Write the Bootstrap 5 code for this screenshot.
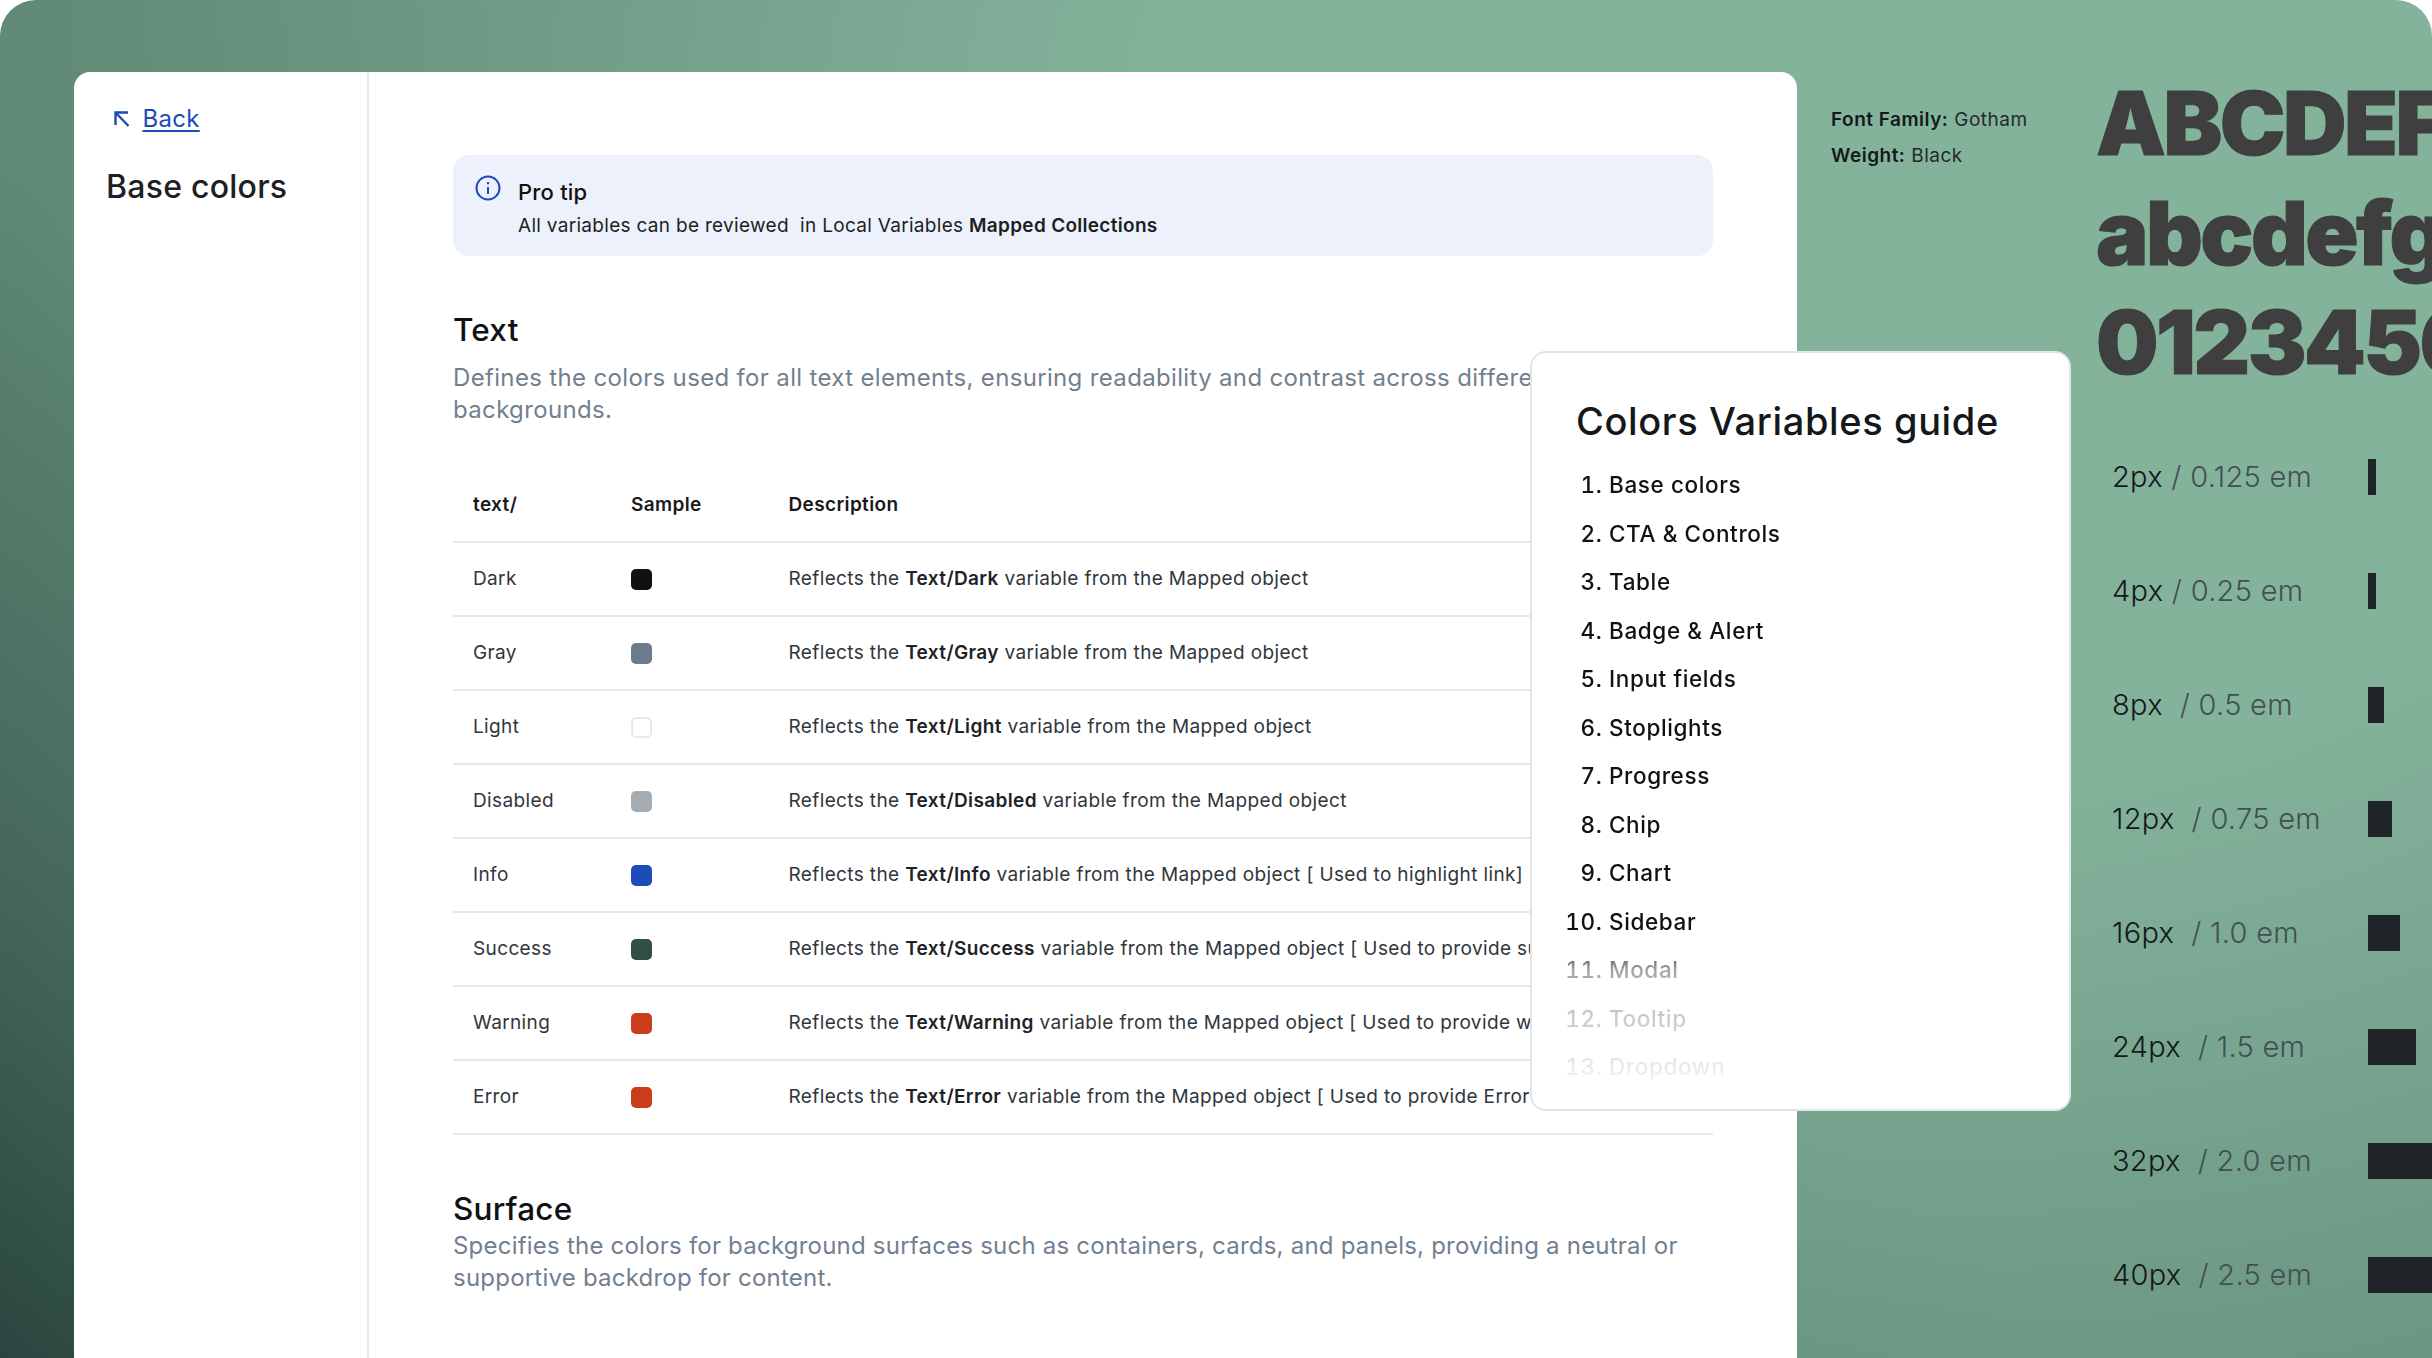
<!DOCTYPE html>
<html lang="en"><head><meta charset="utf-8"><title>Colors Variables guide</title>
<link href="https://cdn.jsdelivr.net/npm/bootstrap@5.3.0/dist/css/bootstrap.min.css" rel="stylesheet">
<style>
html,body{height:100%;margin:0;background:#fff;overflow:hidden}
body{font-family:Inter,"Liberation Sans",sans-serif;color:#111}
.stage{position:relative;height:1358px;width:2432px;overflow:hidden;border-radius:36px 36px 0 0;padding:72px 0 0 74px;
 background:linear-gradient(40deg,#2a453f 0,rgba(58,90,80,.75) 14%,rgba(90,130,112,.2) 36%,rgba(120,165,145,0) 52%),
 radial-gradient(ellipse 1900px 1500px at 80% 12%,#84b39c 0,#84b39c 40%,#628c78 100%)}
.doc{width:1723px;height:1400px;background:#fff;border-radius:16px 16px 0 0;flex:none}
.doc-side{width:295px;flex:none;border-right:2px solid #e6e8eb;padding:31px 0 0 32px}
.back-link{color:#1d4bb8;font-size:24px;line-height:32px;letter-spacing:.3px;text-decoration:underline;text-underline-offset:3px;margin-left:6px;gap:10.5px}
.side-title{font-size:32px;font-weight:500;line-height:40px;margin:32px 0 0;letter-spacing:.25px;color:#1d2125}
.doc-main{padding:83px 84px 0 84px;width:1428px}
.tip{background:#edf1fb;border-radius:16px;height:101px;padding:20px 22px;gap:17px}
.tip-title{font-size:22px;font-weight:500;line-height:30px;margin-top:2px;letter-spacing:.2px}
.tip-body{font-size:19px;line-height:28px;margin-top:5px;letter-spacing:.3px;color:#1c1f22}
.tip-body b,.cell-desc b{font-weight:600}
.sect-h{font-size:31.5px;font-weight:500;line-height:40px;margin:0;letter-spacing:.2px}
.sect-p{font-size:24px;line-height:32px;color:#71808f;margin:0;white-space:nowrap;letter-spacing:.22px}
.sect-text{margin-top:54px}
.sect-text .sect-p{margin-top:12px;letter-spacing:.34px}
.spec-table{table-layout:fixed;width:1260px;margin:42px 0 0;white-space:nowrap;font-size:19px;color:#30363b}
.spec-table th,.spec-table td{height:74px;padding:1px 0 0 20px;vertical-align:middle;border-bottom:2px solid #e5e7ea;background:transparent;letter-spacing:.37px}
.spec-table th{font-weight:600;color:#17191c}
.col-a{width:158px}
.col-b{width:157.5px}
.swatch{display:block;width:21px;height:21px;border-radius:5px}
.swatch-light{background:#fff;border:2px solid #e6e8eb}
.cell-desc b{color:#1e2226}
.sect-surface{margin-top:54px}
.sect-surface .sect-p{margin-top:1px}
.guide{position:absolute;left:1530px;top:351px;width:541px;height:760px;background:#fff;border:2px solid #e2e5e8;border-radius:16px;padding:45px 0 0 44px}
.guide-title{font-size:38px;font-weight:500;line-height:46px;margin:0;letter-spacing:.62px;color:#15181b}
.guide-list{margin:17px 0 0 -30px;padding:0 0 0 63px;font-size:22.5px;font-weight:500;letter-spacing:.62px;height:650px;
 -webkit-mask-image:linear-gradient(#000 0,#000 480px,rgba(0,0,0,.38) 509px,rgba(0,0,0,.22) 557px,rgba(0,0,0,.09) 606px,rgba(0,0,0,0) 640px);
 mask-image:linear-gradient(#000 0,#000 480px,rgba(0,0,0,.38) 509px,rgba(0,0,0,.22) 557px,rgba(0,0,0,.09) 606px,rgba(0,0,0,0) 640px)}
.guide-list li{height:48.5px;line-height:48.5px}
.fonts{padding:30px 0 0 34px;flex:1 1 auto;min-width:0}
.meta{width:265px;flex:none;font-size:19px;line-height:36px;letter-spacing:.5px;color:#25292c}
.meta b{font-weight:600;color:#14181a}
.specimen{flex:none}
.glyphs{font-size:88px;font-weight:900;line-height:109.5px;color:#3f3f3f;white-space:nowrap;letter-spacing:-2.5px;height:330px;margin-top:-33px;-webkit-text-stroke:1px #3f3f3f}
.scale-rows{padding:60px 0 0 16px;gap:78px}
.scale-label{width:256px;flex:none;font-size:29px;line-height:36px;color:#434f52;white-space:nowrap;letter-spacing:.3px;font-weight:300}
.scale-label span{color:#14181a}
.scale-bar{height:36px;background:#1f2428;display:block;flex:none}
</style></head>
<body>
<div class="stage d-flex">
 <div class="doc d-flex">
  <aside class="doc-side">
   <a class="back-link d-inline-flex align-items-center" href="#"><svg width="20" height="20" viewBox="0 0 20 20" fill="none" stroke="#1d4bb8" stroke-width="2.4"><path d="M3.5 16V3.5H16M3.5 3.5 16.5 17"/></svg><span>Back</span></a>
   <h1 class="side-title">Base colors</h1>
  </aside>
  <main class="doc-main">
   <div class="tip d-flex">
    <svg class="flex-shrink-0" width="26" height="26" viewBox="0 0 26 26" fill="none" stroke="#1d4bb8" stroke-width="2"><circle cx="13" cy="13" r="11.5"/><path d="M13 12v7M13 7v2.2"/></svg>
    <div><div class="tip-title">Pro tip</div>
    <div class="tip-body">All variables can be reviewed &nbsp;in Local Variables <b>Mapped Collections</b></div></div>
   </div>
   <section class="sect-text">
    <h2 class="sect-h">Text</h2>
    <p class="sect-p">Defines the colors used for all text elements, ensuring readability and contrast across different<br>backgrounds.</p>
    <table class="table spec-table">
     <thead><tr><th class="col-a">text/</th><th class="col-b">Sample</th><th>Description</th></tr></thead>
     <tbody>
      <tr><td>Dark</td><td><i class="swatch" style="background:#111"></i></td><td class="cell-desc">Reflects the <b>Text/Dark</b> variable from the Mapped object</td></tr>
      <tr><td>Gray</td><td><i class="swatch" style="background:#6c7c8d"></i></td><td class="cell-desc">Reflects the <b>Text/Gray</b> variable from the Mapped object</td></tr>
      <tr><td>Light</td><td><i class="swatch swatch-light"></i></td><td class="cell-desc">Reflects the <b>Text/Light</b> variable from the Mapped object</td></tr>
      <tr><td>Disabled</td><td><i class="swatch" style="background:#a5adb3"></i></td><td class="cell-desc">Reflects the <b>Text/Disabled</b> variable from the Mapped object</td></tr>
      <tr><td>Info</td><td><i class="swatch" style="background:#1d4bb8"></i></td><td class="cell-desc">Reflects the <b>Text/Info</b> variable from the Mapped object [ Used to highlight link]</td></tr>
      <tr><td>Success</td><td><i class="swatch" style="background:#2f4f47"></i></td><td class="cell-desc">Reflects the <b>Text/Success</b> variable from the Mapped object [ Used to provide success ]</td></tr>
      <tr><td>Warning</td><td><i class="swatch" style="background:#c93d1a"></i></td><td class="cell-desc">Reflects the <b>Text/Warning</b> variable from the Mapped object [ Used to provide warning ]</td></tr>
      <tr><td>Error</td><td><i class="swatch" style="background:#c93d1a"></i></td><td class="cell-desc">Reflects the <b>Text/Error</b> variable from the Mapped object [ Used to provide Error ]</td></tr>
     </tbody>
    </table>
   </section>
   <section class="sect-surface">
    <h2 class="sect-h">Surface</h2>
    <p class="sect-p">Specifies the colors for background surfaces such as containers, cards, and panels, providing a neutral or<br>supportive backdrop for content.</p>
   </section>
  </main>
 </div>
 <div class="fonts d-flex">
  <div class="meta"><div><b>Font Family:</b> Gotham</div><div><b>Weight:</b> Black</div></div>
  <div class="specimen">
   <div class="glyphs">ABCDEFG<br>abcdefgh<br>01234567</div>
   <div class="scale-rows d-flex flex-column">
    <div class="d-flex"><div class="scale-label"><span>2px</span> / 0.125 em</div><i class="scale-bar" style="width:8px"></i></div>
    <div class="d-flex"><div class="scale-label"><span>4px</span> / 0.25 em</div><i class="scale-bar" style="width:8px"></i></div>
    <div class="d-flex"><div class="scale-label"><span>8px</span> &nbsp;/ 0.5 em</div><i class="scale-bar" style="width:16px"></i></div>
    <div class="d-flex"><div class="scale-label"><span>12px</span> &nbsp;/ 0.75 em</div><i class="scale-bar" style="width:24px"></i></div>
    <div class="d-flex"><div class="scale-label"><span>16px</span> &nbsp;/ 1.0 em</div><i class="scale-bar" style="width:32px"></i></div>
    <div class="d-flex"><div class="scale-label"><span>24px</span> &nbsp;/ 1.5 em</div><i class="scale-bar" style="width:48px"></i></div>
    <div class="d-flex"><div class="scale-label"><span>32px</span> &nbsp;/ 2.0 em</div><i class="scale-bar" style="width:64px"></i></div>
    <div class="d-flex"><div class="scale-label"><span>40px</span> &nbsp;/ 2.5 em</div><i class="scale-bar" style="width:80px"></i></div>
   </div>
  </div>
 </div>
 <div class="guide">
  <h2 class="guide-title">Colors Variables guide</h2>
  <ol class="guide-list">
   <li>Base colors</li><li>CTA &amp; Controls</li><li>Table</li><li>Badge &amp; Alert</li><li>Input fields</li><li>Stoplights</li><li>Progress</li><li>Chip</li><li>Chart</li><li>Sidebar</li><li>Modal</li><li>Tooltip</li><li>Dropdown</li>
  </ol>
 </div>
</div>
<script src="https://cdn.jsdelivr.net/npm/bootstrap@5.3.0/dist/js/bootstrap.bundle.min.js"></script>
</body></html>
